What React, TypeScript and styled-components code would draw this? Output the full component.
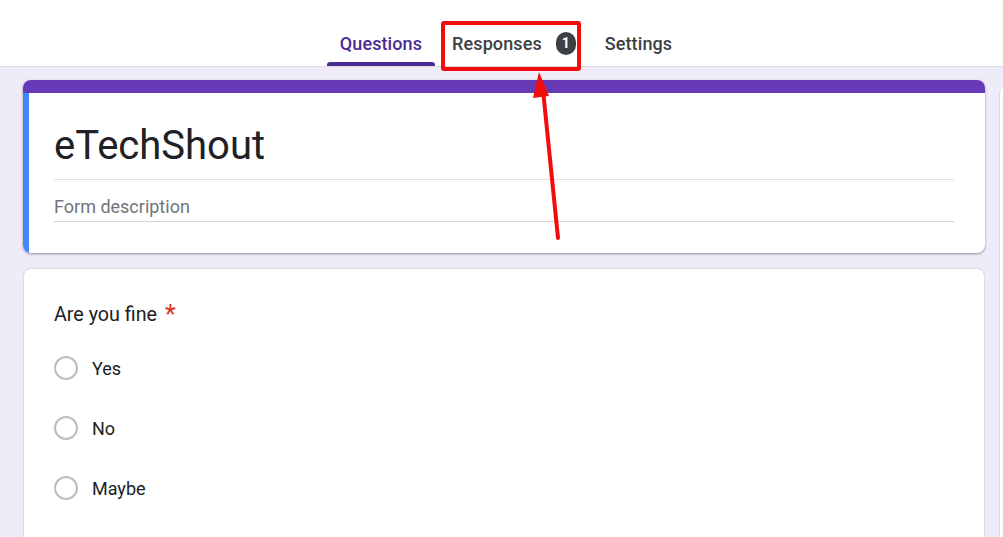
import React from "react";
import styled, { createGlobalStyle } from "styled-components";

const Global = createGlobalStyle`
  html, body { margin: 0; padding: 0; }
  body {
    background: #f0ebf8;
    font-family: Roboto, "Noto Sans", Arial, sans-serif;
    color: #202124;
    overflow: hidden;
  }
`;

const Page = styled.div`
  position: relative;
  width: 1003px;
  height: 537px;
  overflow: hidden;
`;

const Header = styled.header`
  height: 66px;
  background: #fff;
  border-bottom: 1px solid #dadce0;
  display: flex;
  justify-content: center;
  align-items: stretch;
`;

const Tabs = styled.nav`
  display: flex;
  align-items: stretch;
  gap: 5px;
  margin-left: 8px;
`;

const Tab = styled.div<{ $active?: boolean }>`
  position: relative;
  display: flex;
  align-items: center;
  gap: 14px;
  padding: 20px ${(p) => (p.$active ? "13px" : "12px")} 0;
  font-size: 18px;
  font-weight: 500;
  letter-spacing: 0.1px;
  color: ${(p) => (p.$active ? "#4a2a93" : "#3c4043")};
  &::after {
    content: "";
    display: ${(p) => (p.$active ? "block" : "none")};
    position: absolute;
    left: 0;
    right: 0;
    bottom: 0;
    height: 4px;
    border-radius: 3px 3px 0 0;
    background: #4a2a93;
  }
`;

const Badge = styled.span`
  display: inline-flex;
  align-items: center;
  justify-content: center;
  width: 20px;
  height: 23px;
  border-radius: 10px;
  background: #3c4043;
  color: #fff;
  font-size: 14px;
  font-weight: 700;
`;

const Main = styled.main`
  display: flex;
  align-items: flex-start;
  gap: 15px;
  padding: 13px 0 0 23px;
`;

const Column = styled.div`
  width: 962px;
  flex: none;
  display: flex;
  flex-direction: column;
  gap: 15px;
`;

const TitleCard = styled.section`
  background: #fff;
  border-radius: 8px;
  overflow: hidden;
  box-shadow: 0 1px 2px rgba(0, 0, 0, 0.3), 0 1px 3px 1px rgba(0, 0, 0, 0.08);
`;

const TopBar = styled.div`
  height: 13px;
  background: #673ab7;
`;

const TitleBody = styled.div`
  border-left: 6px solid #4285f4;
  padding: 30px 31px 31px 25px;
`;

const Title = styled.h1`
  margin: 0;
  font-size: 40px;
  font-weight: 400;
  line-height: 46px;
  padding-bottom: 10px;
  border-bottom: 1px solid #e0e0e0;
  color: #202124;
`;

const Description = styled.div`
  font-size: 18px;
  line-height: 24px;
  padding: 15px 0 2px;
  color: #70757a;
  border-bottom: 1px solid #d5d5d5;
`;

const QuestionCard = styled.section`
  background: #fff;
  border: 1px solid #dadce0;
  border-radius: 8px;
  padding: 32px 30px 40px 30px;
  height: 400px;
`;

const Question = styled.div`
  font-size: 19.7px;
  line-height: 24px;
  color: #202124;
  margin-bottom: 11px;
`;

const Required = styled.span`
  color: #d93025;
  margin-left: 8px;
  font-size: 25px;
  position: relative;
  top: 2px;
`;

const Option = styled.label`
  display: flex;
  align-items: center;
  gap: 14px;
  height: 60px;
  font-size: 18px;
  color: #202124;
`;

const Radio = styled.span`
  width: 20px;
  height: 20px;
  border: 2px solid #bdbdbd;
  border-radius: 50%;
  flex: none;
`;

const SidePanel = styled.aside`
  margin-top: 5px;
  width: 48px;
  height: 460px;
  flex: none;
  background: #fff;
  border-radius: 8px;
  box-shadow: 0 1px 2px rgba(0, 0, 0, 0.3);
`;

const Highlight = styled.div`
  position: absolute;
  left: 441px;
  top: 21px;
  width: 140px;
  height: 50px;
  box-sizing: border-box;
  border: 4px solid #f20d0d;
  border-radius: 3px;
  pointer-events: none;
`;

const Arrow = styled.svg`
  position: absolute;
  left: 520px;
  top: 60px;
  pointer-events: none;
`;

export default function App() {
  return (
    <Page>
      <Global />
      <Header>
        <Tabs>
          <Tab $active>Questions</Tab>
          <Tab>
            Responses <Badge>1</Badge>
          </Tab>
          <Tab>Settings</Tab>
        </Tabs>
      </Header>
      <Main>
        <Column>
          <TitleCard>
            <TopBar />
            <TitleBody>
              <Title>eTechShout</Title>
              <Description>Form description</Description>
            </TitleBody>
          </TitleCard>
          <QuestionCard>
            <Question>
              Are you fine<Required>*</Required>
            </Question>
            {["Yes", "No", "Maybe"].map((o) => (
              <Option key={o}>
                <Radio />
                {o}
              </Option>
            ))}
          </QuestionCard>
        </Column>
        <SidePanel />
      </Main>
      <Highlight />
      <Arrow width="60" height="190" viewBox="0 0 60 190">
        <line x1="38" y1="178" x2="23" y2="30" stroke="#f20d0d" strokeWidth="4" strokeLinecap="round" />
        <polygon points="19,12 29,36 13,38" fill="#f20d0d" />
      </Arrow>
    </Page>
  );
}
